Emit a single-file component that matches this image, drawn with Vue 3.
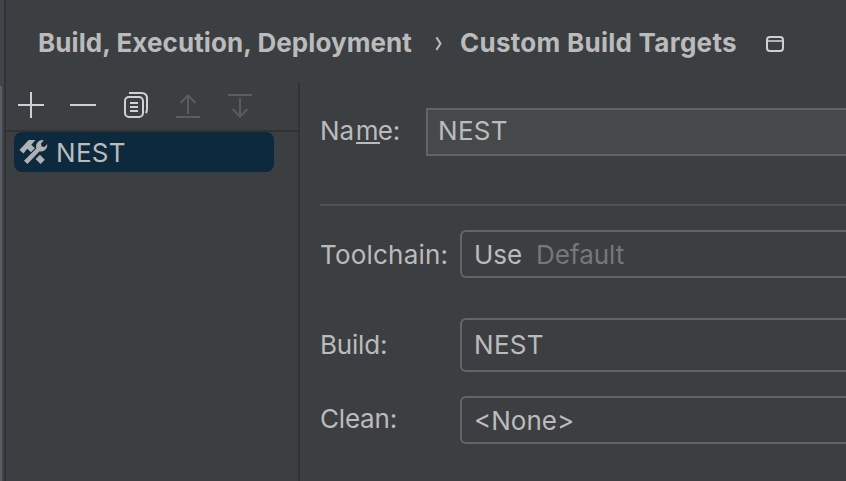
<script setup>
const rows = [
  { key: 'toolchain', label: 'Toolchain:', prefix: 'Use', value: 'Default', muted: true },
  { key: 'build', label: 'Build:', value: 'NEST' },
  { key: 'clean', label: 'Clean:', value: '<None>' },
]
</script>

<template>
  <div class="window">
    <div class="gutter"><div class="gutter-bar"></div></div>
    <main class="page">
      <header class="crumbs">
        <span class="crumb first">Build, Execution, Deployment</span>
        <svg class="chevron" width="8" height="16" viewBox="0 0 8 16"><path d="M1.4 2.4 5.5 8.6 1.4 14.9" fill="none" stroke="#bbb" stroke-width="2" /></svg>
        <span class="crumb second">Custom Build Targets</span>
        <svg class="win" width="18" height="16" viewBox="0 0 18 16">
          <rect x="1" y="1" width="16" height="14" rx="3" fill="none" stroke="#ced0d6" stroke-width="2" />
          <path d="M1 5H17" stroke="#ced0d6" stroke-width="1.6" />
        </svg>
      </header>
      <div class="body">
        <aside class="sidebar">
          <div class="toolbar">
            <svg class="tool" viewBox="0 0 26 26"><path d="M13 0V26M0 13H26" /></svg>
            <svg class="tool" viewBox="0 0 26 26"><path d="M0 13H26" /></svg>
            <svg class="tool" viewBox="0 0 26 26">
              <rect x="3" y="5" width="18" height="20" rx="4" />
              <path d="M7 1H19.5Q25 1 25 6.5V17Q25 19.5 23.7 21M8 11H16M8 15H16M8 19H16" />
            </svg>
            <svg class="tool off" viewBox="0 0 26 26"><path d="M2 25H26M14 22V4M6.5 11 14 3.5 21.5 11" /></svg>
            <svg class="tool off" viewBox="0 0 26 26"><path d="M2 3H26M14 6V24M6.5 17 14 24.5 21.5 17" /></svg>
          </div>
          <div class="item">
            <svg class="hammer" width="29" height="26" viewBox="0 0 29 26">
              <path fill="#afb1b3" d="M9.7 1H16.5L12.3 5.7 16 9.3 12 13.3 8.3 9.8 4.5 14.5 .4 10.9ZM16.6 20 20.9 15.8 25.8 20.8 21.5 25Z" />
              <path fill="#afb1b3" d="M5 21.8 17.3 9.5Q16.3 5.7 18.8 3Q21.3.4 24.8 1.4L22 4.4 22.6 7.4 25.5 8 28.2 5.1Q28.8 8.3 26.6 10.6Q24 13.1 20.6 12.3L8.4 25Z" />
            </svg>
            <span class="caps">NEST</span>
          </div>
        </aside>
        <section class="form">
          <div class="name-row">
            <span class="name-label">Na<span class="mnemonic">m</span>e:</span>
            <div class="field caps">NEST</div>
          </div>
          <div class="separator"></div>
          <div v-for="row in rows" :key="row.key" class="row" :class="row.key">
            <span class="label">{{ row.label }}</span>
            <div class="combo">
              <span v-if="row.prefix" class="prefix">{{ row.prefix }}</span>
              <span class="value" :class="{ muted: row.muted }">{{ row.value }}</span>
            </div>
          </div>
        </section>
      </div>
    </main>
  </div>
</template>

<style>
body { margin: 0; background: #3c3f41; overflow: hidden; }
</style>

<style scoped>
* { box-sizing: border-box; }
.window { display: flex; width: 846px; height: 481px; overflow: hidden; background: #3c3f41; color: #bbb; font: 400 26px/32px Inter, sans-serif; white-space: nowrap; }
svg { display: block; flex: none; }
.gutter { flex: none; width: 6px; padding-top: 86px; background: #3e434c; border-right: 2px solid #323232; }
.gutter-bar { width: 2px; height: 395px; background: #5a5d63; }
.page { flex: 1; min-width: 0; }
.crumbs { display: flex; height: 82px; padding: 27px 0 0 32px; font-weight: 700; }
.first { width: 397px; letter-spacing: 0.08px; }
.second { width: 306px; margin-left: 17px; letter-spacing: 0.27px; }
.chevron { margin-top: 8px; }
.win { margin-top: 9px; }
.body { display: flex; height: 399px; }
.sidebar { flex: none; width: 294px; border-right: 2px solid #323232; }
.toolbar { display: flex; gap: 26px; height: 50px; padding: 10px 0 0 12px; border-bottom: 2px solid #323232; }
.tool { width: 26px; height: 26px; fill: none; stroke: #ced0d6; stroke-width: 2; }
.off { stroke: #5a5d5f; }
.item { display: flex; width: 260px; height: 40px; margin-left: 8px; padding: 5px 0 0 5px; border-radius: 8px; background: #0d293e; }
.hammer { margin: 2px 8px 0 0; }
.caps { letter-spacing: 0.3px; }
.form { flex: 1; min-width: 0; padding: 26px 0 0 20px; }
.name-row { display: flex; height: 48px; }
.name-label { width: 106px; padding-top: 7px; }
.mnemonic { display: inline-block; width: 24px; height: 29px; margin: 0 -2px 0 1.5px; border-bottom: 2px solid #bbb; vertical-align: top; }
.field { flex: 1; padding: 5px 0 0 10px; border: 2px solid #646464; border-right: 0; background: #45494a; }
.separator { height: 2px; margin: 48px 0 24px; background: #515151; }
.row { display: flex; height: 48px; }
.label { width: 140px; padding-top: 9px; }
.toolchain .label { letter-spacing: 0.2px; }
.combo { display: flex; flex: 1; padding: 7px 0 0 12px; border: 2px solid #646464; border-right: 0; border-radius: 6px 0 0 6px; }
.prefix { width: 62px; }
.muted { color: #777; }
.build { height: 54px; margin-top: 40px; }
.build .label { padding-top: 11px; letter-spacing: -0.2px; }
.build .combo { padding-top: 9px; letter-spacing: 0.3px; }
.clean { margin-top: 24px; }
.clean .label { padding-top: 7px; letter-spacing: -0.2px; }
</style>
